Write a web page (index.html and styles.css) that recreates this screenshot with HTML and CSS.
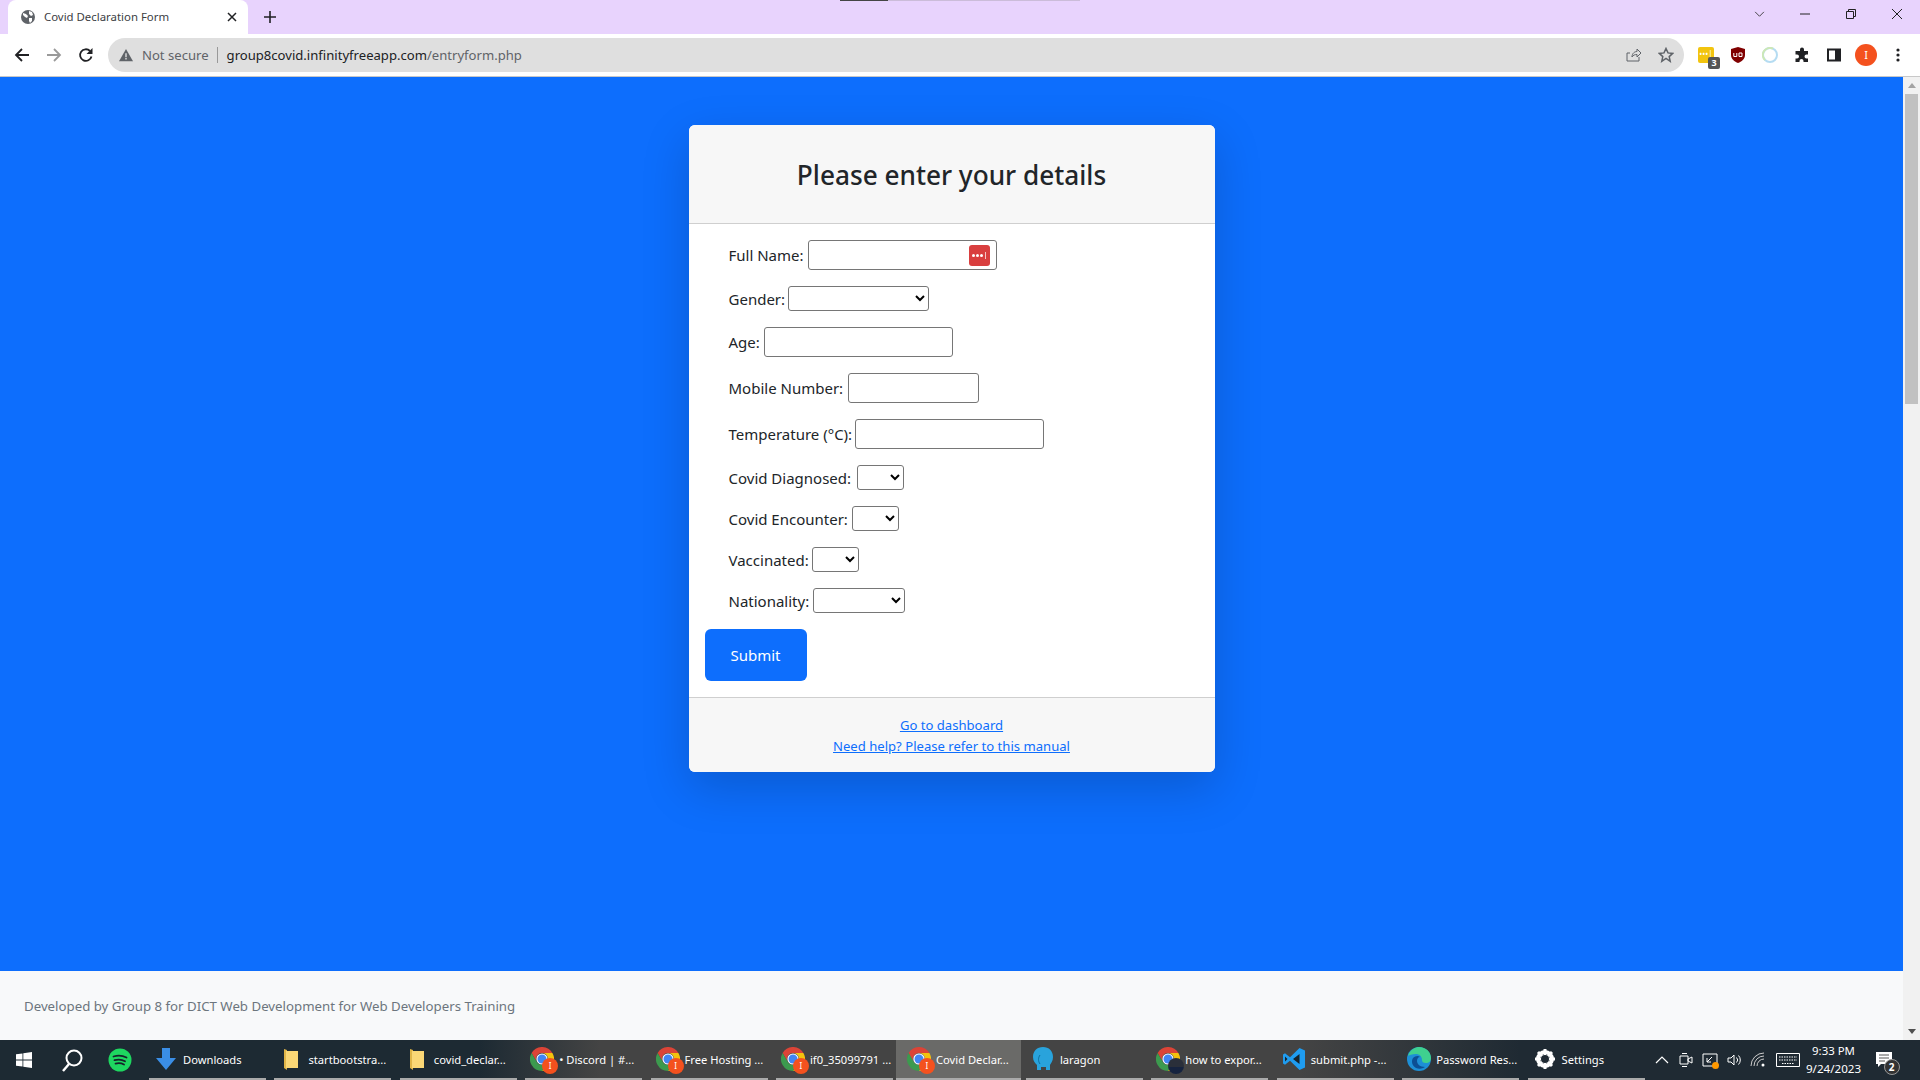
FILE: index.html
```html
<!doctype html>
<html lang=en>
  <head>
    <meta charset=utf-8 />
    <title>Covid Declaration Form</title>
    <link rel="stylesheet" href="styles.css">
  </head>
  <body>
    <svg class=defs width=0 height=0>
      <symbol id=chrome viewBox="0 0 24 24">
        <path fill=#db4437 d="M1.6 6A12 12 0 0 1 22.4 6H12A6 6 0 0 0 6.8 15Z"/>
        <path fill=#f4c20d d="M22.4 6A12 12 0 0 1 12 24l5.2-9A6 6 0 0 0 12 6Z"/>
        <path fill=#3c9a4e d="M12 24A12 12 0 0 1 1.6 6l5.2 9A6 6 0 0 0 17.2 15Z"/>
        <circle cx=12 cy=12 r=5.6 fill=#fff />
        <circle cx=12 cy=12 r=4.5 fill=#4285f4 />
      </symbol>
      <symbol id=folder viewBox="0 0 24 24">
        <path fill=#e0b548 d="M5 2l3 1v20l-3-2z"/>
        <path fill=#fad776 d="M7 4h12v17H7z"/>
      </symbol>
    </svg>

    <div class=tabstrip>
      <div class=loadbar></div>
      <div class=tab>
        <svg class=favicon viewBox="0 0 16 16"><circle cx=8 cy=8 r=7 fill=#5f6368 /><path fill=#fff d="M3 4l3 1 2 2-1 2-2-1-2-2zM9 2l3 1 1 3-2 1-2-2zM9 9l3 0 0 3-2 2-1-2z"/></svg>
        <span class=tab-title>Covid Declaration Form</span>
        <svg class=tab-close viewBox="0 0 10 10"><path d="M1 1l8 8M9 1l-8 8" stroke=#202124 stroke-width=1.5 /></svg>
      </div>
      <svg class=tab-new viewBox="0 0 12 12"><path d="M6 0v12M0 6h12" stroke=#202124 stroke-width=1.6 /></svg>
      <div class=window-btns>
        <svg class=win-chevron viewBox="0 0 12 8"><path d="M1 1l5 5 5-5" fill=none stroke=#333 /></svg>
        <svg class=win-btn viewBox="0 0 12 12"><path d="M1 6h10" stroke=#222 /></svg>
        <svg class=win-btn viewBox="0 0 12 12"><path d="M1.5 3.5h7v7h-7zM3.5 3.5v-2h7v7h-2" fill=none stroke=#222 /></svg>
        <svg class=win-btn viewBox="0 0 12 12"><path d="M1 1l10 10M11 1L1 11" stroke=#222 /></svg>
      </div>
    </div>

    <div class=toolbar>
      <svg class=nav-icon viewBox="0 0 16 16"><path d="M15 8H2M8 2L2 8l6 6" fill=none stroke=#202124 stroke-width=1.8 /></svg>
      <svg class=nav-icon viewBox="0 0 16 16"><path d="M1 8h13M8 2l6 6-6 6" fill=none stroke=#9a9a9a stroke-width=1.8 /></svg>
      <svg class=nav-icon viewBox="0 0 16 16"><path d="M13.5 9.5A5.8 5.8 0 1 1 12 4" fill=none stroke=#202124 stroke-width=1.8 /><path d="M14.5 1v6h-6z" fill=#202124 /></svg>
      <div class=omnibox>
        <svg class=warn viewBox="0 0 16 16"><path fill=#5f6368 d="M8 1l8 14H0z"/><path fill=#dfdfdf d="M7.2 6h1.6v4.5H7.2zM7.2 11.500h1.600v1.600H7.200z"/></svg>
        <span class=not-secure>Not secure</span>
        <span class=omni-sep></span>
        <span class=url>group8covid.infinityfreeapp.com<span class=url-path>/entryform.php</span></span>
        <svg class=omni-icon viewBox="0 0 16 16"><path d="M13 10v4H1V6h3M6 10c0-4 3-5.500 5-5.500V2l4 4-4 4V7.500C9 7.500 7 8 6 10z" fill=none stroke=#5f6368 /></svg>
        <svg class=omni-icon viewBox="0 0 16 16"><path d="M8 1.500l2 4.400 4.700.5-3.500 3.200 1 4.700L8 11.400l-4.200 2.900 1-4.700L1.300 6.400 6 5.900z" fill=none stroke=#5f6368 stroke-width=1.500 /></svg>
      </div>
      <div class=extensions>
        <div class=ext-pass><span class=ext-dots>•••|</span><span class=ext-badge>3</span></div>
        <svg class=ext-icon viewBox="0 0 16 16"><path fill=#800000 d="M8 0l7 2v6c0 4-3.500 6.800-7 8-3.500-1.200-7-4-7-8V2z"/><path d="M3.800 6v3.500h3V6M9 9.500V6h3v3.500z" fill=none stroke=#fff /></svg>
        <svg class=ext-icon viewBox="0 0 16 16"><circle cx=8 cy=8 r=7 fill=none stroke=#b5dcf2 stroke-width=2 /><path d="M11 1.700A7 7 0 0 0 3 13" fill=none stroke=#cde8b5 stroke-width=2 /></svg>
        <svg class=ext-icon viewBox="0 0 16 16"><path fill=#202124 d="M6 2.500a2 2 0 0 1 4 0V4h4v3.500h-1.500a2 2 0 0 0 0 4H14V15H9.500v-1a2 2 0 0 0-4 0v1H1.500v-3.500H3a2 2 0 0 0 0-4H1.500V4H6z"/></svg>
        <svg class=ext-icon viewBox="0 0 16 16"><path fill=#202124 fill-rule=evenodd d="M1 1.500h14v13H1zM3 3.500v9h6v-9z"/></svg>
        <span class=avatar>I</span>
        <svg class=ext-icon viewBox="0 0 16 16"><circle cx=8 cy=3 r=1.600 fill=#202124 /><circle cx=8 cy=8 r=1.600 fill=#202124 /><circle cx=8 cy=13 r=1.600 fill=#202124 /></svg>
      </div>
    </div>

    <div class=viewport>
      <div class=page>
        <main class=page-main>
          <div class=card>
            <div class=card-header>
              <h3>Please enter your details</h3>
            </div>
            <form class=card-body>
              <div class=form-row>
                <label for=fullname>Full Name:</label>
                <div class=input-wrap>
                  <input id=fullname class=input-md type=text>
                  <span class=lastpass><i></i><i></i><i></i><b></b></span>
                </div>
              </div>
              <div class=form-row>
                <label for=gender>Gender:</label>
                <select id=gender class=select-lg><option></option></select>
              </div>
              <div class=form-row>
                <label for=age>Age:</label>
                <input id=age class=input-md type=text>
              </div>
              <div class=form-row>
                <label for=mobile>Mobile Number:</label>
                <input id=mobile class=input-sm type=text>
              </div>
              <div class=form-row>
                <label for=temp>Temperature (°C):</label>
                <input id=temp class=input-md type=text>
              </div>
              <div class=form-row>
                <label for=diagnosed>Covid Diagnosed:</label>
                <select id=diagnosed class=select-sm><option></option></select>
              </div>
              <div class=form-row>
                <label for=encounter>Covid Encounter:</label>
                <select id=encounter class=select-sm><option></option></select>
              </div>
              <div class=form-row>
                <label for=vaccinated>Vaccinated:</label>
                <select id=vaccinated class=select-sm><option></option></select>
              </div>
              <div class=form-row>
                <label for=nationality>Nationality:</label>
                <select id=nationality class=select-md><option></option></select>
              </div>
              <button class=btn-submit type=button>Submit</button>
            </form>
            <div class=card-footer>
              <a href="#">Go to dashboard</a>
              <a href="#">Need help? Please refer to this manual</a>
            </div>
          </div>
        </main>
        <footer class=page-footer>Developed by Group 8 for DICT Web Development for Web Developers Training</footer>
      </div>
      <div class=scrollbar>
        <span class=arrow-up></span>
        <span class=thumb></span>
        <span class=arrow-down></span>
      </div>
    </div>

    <div class=taskbar>
      <svg class=tb-start viewBox="0 0 16 16"><path fill=#fff d="M0 2.300l6.500-.9v6.200H0zM7.300 1.300L16 0v7.600H7.300zM0 8.400h6.500v6.200L0 13.700zM7.300 8.400H16V16l-8.700-1.200z"/></svg>
      <svg class=tb-search viewBox="0 0 24 24"><circle cx=14 cy=10 r=7.500 fill=none stroke=#fff stroke-width=2 /><path d="M9 16l-6 7" stroke=#fff stroke-width=2.400 /></svg>
      <svg class=tb-spotify viewBox="0 0 24 24"><circle cx=12 cy=12 r=11.500 fill=#1ed760 /><path d="M5.500 8.500c4-1.200 9-1 13 1M6.500 12.200c3.500-1 7.500-.7 10.500 1M7.500 15.600c3-.8 6-.5 8.500.9" fill=none stroke=#16232b stroke-width=1.800 stroke-linecap=round /></svg>
      <div class=tasks>
        <div class=task>
          <svg class=task-icon viewBox="0 0 24 24"><path fill=#3a8ee6 d="M8 1h8v10h6L12 23 2 11h6z"/></svg>
          <span>Downloads</span>
        </div>
        <div class=task><svg class=task-icon><use href="#folder"/></svg><span>startbootstra...</span></div>
        <div class=task><svg class=task-icon><use href="#folder"/></svg><span>covid_declar...</span></div>
        <div class=task><div class=app-chrome><svg class=task-icon><use href="#chrome"/></svg><i class=mini-avatar>I</i></div><span>• Discord | #...</span></div>
        <div class=task><div class=app-chrome><svg class=task-icon><use href="#chrome"/></svg><i class=mini-avatar>I</i></div><span>Free Hosting ...</span></div>
        <div class=task><div class=app-chrome><svg class=task-icon><use href="#chrome"/></svg><i class=mini-avatar>I</i></div><span>if0_35099791 ...</span></div>
        <div class="task task-active"><div class=app-chrome><svg class=task-icon><use href="#chrome"/></svg><i class=mini-avatar>I</i></div><span>Covid Declar...</span></div>
        <div class=task>
          <svg class=task-icon viewBox="0 0 24 24"><path fill=#29a3dc d="M12 0c6 0 10 4 10 10 0 4-2 6-3 8v5h-4v-3h-5v3H6v-5c-2-2-4-4-4-8C2 4 6 0 12 0z"/><path d="M9 8c-2 3-2 6 0 9" fill=none stroke=#0d6d9c /></svg>
          <span>laragon</span>
        </div>
        <div class=task><div class=app-chrome><svg class=task-icon><use href="#chrome"/></svg><i class="mini-avatar mini-photo"></i></div><span>how to expor...</span></div>
        <div class=task>
          <svg class=task-icon viewBox="0 0 24 24"><path fill=#1f9cf0 d="M17.500 1L23 3.500v17L17.500 23 8 13.800 3 17.700 1 16.500V7.500l2-1.200 5 3.900z"/><path fill=#16232b d="M17.500 7L11 12l6.500 5zM3 9.500v5l2.500-2.500z"/></svg>
          <span>submit.php -...</span>
        </div>
        <div class=task>
          <svg class=task-icon viewBox="0 0 24 24"><circle cx=12 cy=12 r=12 fill=#1d8fd6 /><path fill=#3fd08f d="M1 9C3 2 9 0 12 0c7 0 12 5 12 11 0 3-2 5-5 5-3 0-4-1-4-3 0-4-3-6-6-6-4 0-7 1-8 2z"/><path fill=#0c4f94 d="M9 21c-4-2-5-7-3-10 2-2 5-3 7-1-2 0-3 2-3 4 0 3 3 6 8 6-3 2-6 2-9 1z"/></svg>
          <span>Password Res...</span>
        </div>
        <div class=task>
          <svg class=task-icon viewBox="0 0 24 24"><circle cx=12 cy=12 r=7 fill=none stroke=#fff stroke-width=4 /><path d="M12 2v20M2 12h20M5 5l14 14M19 5L5 19" stroke=#fff stroke-width=3 /><circle cx=12 cy=12 r=4 fill=#1f2a33 /></svg>
          <span>Settings</span>
        </div>
      </div>
      <div class=tray>
        <svg class=tray-icon viewBox="0 0 16 16"><path d="M2 11l6-6 6 6" fill=none stroke=#fff stroke-width=1.200 /></svg>
        <svg class=tray-icon viewBox="0 0 16 16"><path d="M2 4h8v8H2zM10 7l4-2v6l-4-2zM4 1.500h5M4 14.500h5" fill=none stroke=#fff /></svg>
        <div class=tray-cap>
          <svg class=tray-icon viewBox="0 0 16 16"><path d="M1 2h14v12H1zM5 10l5-5M5 6v4h4" fill=none stroke=#fff /></svg>
          <i class=tray-dot></i>
        </div>
        <svg class=tray-icon viewBox="0 0 16 16"><path d="M2 6h3l3-3v10l-3-3H2zM10.500 5.500a3.500 3.500 0 0 1 0 5M12.500 3.500a6.500 6.500 0 0 1 0 9" fill=none stroke=#fff /></svg>
        <svg class=tray-icon viewBox="0 0 16 16"><path d="M1 14a13 13 0 0 1 13-13M4 14a10 10 0 0 1 10-10M7 14a7 7 0 0 1 7-7" fill=none stroke=#ccc /><circle cx=13 cy=13 r=1.500 fill=#fff /></svg>
        <svg class=tray-kbd viewBox="0 0 24 16"><path d="M.5 1.500h23v13H.5z" fill=none stroke=#fff /><path d="M3 5h18M3 8h18M6 11.500h12" stroke=#fff stroke-dasharray="1.500 1" /></svg>
        <div class=clock><span>9:33 PM</span><span class=clock-date>9/24/2023</span></div>
        <div class=notif>
          <svg class=notif-icon viewBox="0 0 16 16"><path fill=#fff d="M0 0h16v12H5l-3 3v-3H0z"/><path d="M3 3h10M3 6h10M3 9h6" stroke=#555 /></svg>
          <span class=notif-badge>2</span>
        </div>
      </div>
    </div>
  </body>
</html>
```

FILE: styles.css
```css
html, body {
  height: 100%;
}

body {
  display: flex;
  flex-direction: column;
  font-family: 'Noto Sans', sans-serif;
  margin: 0;
  overflow: hidden;
  padding: 0;
}

.defs { position: absolute; }

/* browser tabs */
.tabstrip {
  align-items: flex-end;
  background: #e8d3fd;
  display: flex;
  flex: none;
  height: 34px;
  padding-left: 8px;
  position: relative;
}

.loadbar {
  background: linear-gradient(90deg, #444 0 48px, #cbbcd9 48px);
  height: 1px;
  left: 840px;
  position: absolute;
  top: 0;
  width: 240px;
}

.tab {
  align-items: center;
  background: #fff;
  border-radius: 8px 8px 0 0;
  display: flex;
  height: 34px;
  padding: 0 11px 0 12px;
  width: 240px;
  box-sizing: border-box;
}

.favicon { height: 16px; width: 16px; }

.tab-title {
  color: #3c4043;
  flex: 1;
  font-size: 11.4px;
  margin: -2px 0 0 8px;
}

.tab-close { height: 10px; width: 10px; }

.tab-new {
  align-self: center;
  height: 12px;
  margin-left: 16px;
  width: 12px;
}

.window-btns {
  align-items: center;
  align-self: flex-start;
  display: flex;
  height: 28px;
  margin-left: auto;
  padding-right: 17px;
}

.win-chevron { height: 7px; margin-right: 34px; width: 11px; }
.win-btn { height: 12px; margin-left: 34px; width: 12px; }
.win-chevron + .win-btn { margin-left: 0; }

/* address bar */
.toolbar {
  align-items: center;
  background: #fff;
  border-bottom: 1px solid #c8c8c8;
  display: flex;
  flex: none;
  height: 42px;
  padding-left: 14px;
  box-sizing: content-box;
}

.nav-icon { height: 16px; margin-right: 16px; width: 16px; }

.omnibox {
  align-items: center;
  background: #dfdfdf;
  border-radius: 17px;
  display: flex;
  height: 34px;
  margin-left: -2px;
  padding: 0 10px 0 10px;
  width: 1576px;
  box-sizing: border-box;
}

.warn { height: 14px; margin-left: 1px; width: 14px; }

.not-secure {
  color: #5f6368;
  font-size: 13.1px;
  margin-left: 9px;
}

.omni-sep {
  background: #999;
  height: 16px;
  margin: 0 9px 0 8px;
  width: 1px;
}

.url {
  color: #202124;
  flex: 1;
  font-size: 13.1px;
}

.url-path { color: #5f6368; }

.omni-icon { height: 16px; margin-left: 16px; width: 16px; }
.omni-icon:last-child { margin-right: 0; }

.extensions {
  align-items: center;
  display: flex;
  margin-left: 14px;
}

.ext-pass {
  background: #f2c40f;
  border-radius: 2px;
  color: #fff;
  font-size: 8px;
  height: 16px;
  line-height: 14px;
  position: relative;
  text-align: center;
  width: 16px;
}

.ext-dots { display: block; }

.ext-badge {
  background: #555;
  border-radius: 2px;
  color: #fff;
  font-size: 9px;
  font-weight: 700;
  height: 12px;
  left: 10px;
  line-height: 12px;
  position: absolute;
  top: 10px;
  width: 12px;
}

.ext-icon { height: 16px; margin-left: 16px; width: 16px; }

.avatar {
  background: #f4511e;
  border-radius: 50%;
  color: #fff;
  font-size: 11px;
  height: 22px;
  line-height: 22px;
  margin-left: 13px;
  text-align: center;
  width: 22px;
}

.avatar + .ext-icon { margin-left: 13px; }

/* page */
.viewport {
  display: flex;
  flex: 1;
  min-height: 0;
}

.page {
  display: flex;
  flex: 1;
  flex-direction: column;
  min-width: 0;
}

.page-main {
  background: #0d6efd;
  flex: 1;
  padding-top: 48px;
}

.card {
  background: #fff;
  border-radius: 6px;
  box-shadow: 0 16px 48px rgba(0, 0, 0, .175);
  margin: 0 auto;
  overflow: hidden;
  width: 526px;
}

.card-header {
  background: #f7f7f7;
  border-bottom: 1px solid #cfcfcf;
  box-sizing: border-box;
  height: 99px;
  padding-top: 34px;
  text-align: center;
}

.card-header h3 {
  color: #212529;
  font-size: 26.2px;
  font-weight: 500;
  line-height: 32px;
  margin: 0;
}

.card-body {
  align-items: flex-start;
  display: flex;
  flex-direction: column;
  gap: 16px;
  padding: 16px 16px 16px;
}

.form-row {
  align-items: center;
  color: #212529;
  display: flex;
  font-size: 15px;
  gap: 4px;
  padding-left: 24px;
}

/* the real labels come out a hair off in this font */
#gender, #vaccinated { margin-left: -1px; }
#mobile { margin-left: 1px; }
#temp { margin-left: -1px; }
#diagnosed { margin-left: 2px; }

.input-wrap { position: relative; }

input, select {
  background: #fff;
  border: 1px solid #767676;
  border-radius: 3px;
  box-sizing: border-box;
  display: block;
  margin: 0;
}

input { height: 30px; }
select { height: 25px; }

.input-md { width: 189px; }
.input-sm { width: 131px; }
.select-lg { width: 141px; }
.select-md { width: 92px; }
.select-sm { width: 47px; }

.lastpass {
  align-items: center;
  background: #d93f3f;
  border-radius: 3px;
  box-sizing: border-box;
  display: flex;
  gap: 1px;
  height: 21px;
  padding-left: 3px;
  position: absolute;
  right: 7px;
  top: 5px;
  width: 21px;
}

.lastpass i {
  background: #fff;
  border-radius: 50%;
  height: 3px;
  width: 3px;
}

.lastpass b {
  background: #f3c6c6;
  height: 7px;
  margin-left: 1px;
  width: 1px;
}

.btn-submit {
  background: #0d6efd;
  border: 0;
  border-radius: 6px;
  color: #fff;
  font-family: inherit;
  font-size: 15px;
  height: 52px;
  padding: 0;
  width: 102px;
}

.card-footer {
  background: #f7f7f7;
  border-top: 1px solid #cfcfcf;
  display: flex;
  flex-direction: column;
  font-size: 13.1px;
  line-height: 21px;
  padding: 17px 16px 15px;
  text-align: center;
}

.card-footer a { color: #0d6efd; }

.page-footer {
  background: #f8f9fa;
  color: #6c757d;
  flex: none;
  font-size: 13.25px;
  height: 69px;
  line-height: 71px;
  padding-left: 24px;
}

.scrollbar {
  background: #f1f1f1;
  display: flex;
  flex: none;
  flex-direction: column;
  width: 17px;
}

.arrow-up {
  border-bottom: 5px solid #a3a3a3;
  border-left: 4px solid transparent;
  border-right: 4px solid transparent;
  margin: 6px auto 6px;
  width: 0;
}

.thumb {
  background: #c1c1c1;
  height: 310px;
  margin: 0 2px;
}

.arrow-down {
  border-left: 4px solid transparent;
  border-right: 4px solid transparent;
  border-top: 5px solid #505050;
  margin: auto auto 6px;
  width: 0;
}

/* windows taskbar */
.taskbar {
  align-items: center;
  background: linear-gradient(90deg, #1d2a33 0, #1d2a33 480px, #444 600px, #444 1300px, #1f2a33 1520px);
  color: #fff;
  display: flex;
  flex: none;
  font-size: 11.2px;
  height: 40px;
}

.tb-start { height: 16px; margin-left: 16px; width: 16px; }
.tb-search { height: 24px; margin-left: 28px; width: 24px; }
.tb-spotify { height: 24px; margin-left: 24px; width: 24px; }

.tasks {
  display: flex;
  gap: 8.4px;
  margin-left: 17px;
}

.task {
  align-items: center;
  border-bottom: 2px solid #aaa;
  box-sizing: border-box;
  display: flex;
  gap: 5px;
  height: 40px;
  padding-left: 5px;
  white-space: nowrap;
  width: 117px;
}

.task-active {
  background: #6a6a68;
  margin: 0 -3.4px 0 -5.4px;
  padding-left: 11px;
  width: 125px;
}

.task-icon { display: block; height: 24px; width: 24px; }

.app-chrome { flex: none; position: relative; }

.mini-avatar {
  background: #f4511e;
  border-radius: 50%;
  bottom: -3px;
  color: #fff;
  font-size: 8px;
  font-style: normal;
  height: 16px;
  line-height: 16px;
  position: absolute;
  right: -4px;
  text-align: center;
  width: 16px;
}

.mini-photo { background: linear-gradient(#2a2f3a 55%, #16233f 55%); }

.tray {
  align-items: center;
  display: flex;
  margin-left: 9px;
}

.tray-icon { display: block; height: 16px; margin-right: 8px; width: 16px; }

.tray-cap { position: relative; }

.tray-dot {
  background: #f90;
  border-radius: 50%;
  bottom: -1px;
  height: 7px;
  position: absolute;
  right: 7px;
  width: 7px;
}

.tray-kbd { height: 16px; margin-left: 2px; width: 24px; }

.clock {
  display: flex;
  flex-direction: column;
  font-size: 11.4px;
  line-height: 18.5px;
  margin-left: 2px;
  text-align: center;
  width: 64px;
}

.clock-date { font-size: 11.6px; }

.notif {
  margin-left: 10px;
  position: relative;
}

.notif-icon { display: block; height: 16px; width: 16px; }

.notif-badge {
  background: #333;
  border: 1px solid #999;
  border-radius: 50%;
  font-size: 10px;
  font-weight: 700;
  height: 14px;
  left: 8px;
  line-height: 14px;
  position: absolute;
  text-align: center;
  top: 7px;
  width: 14px;
}
```
